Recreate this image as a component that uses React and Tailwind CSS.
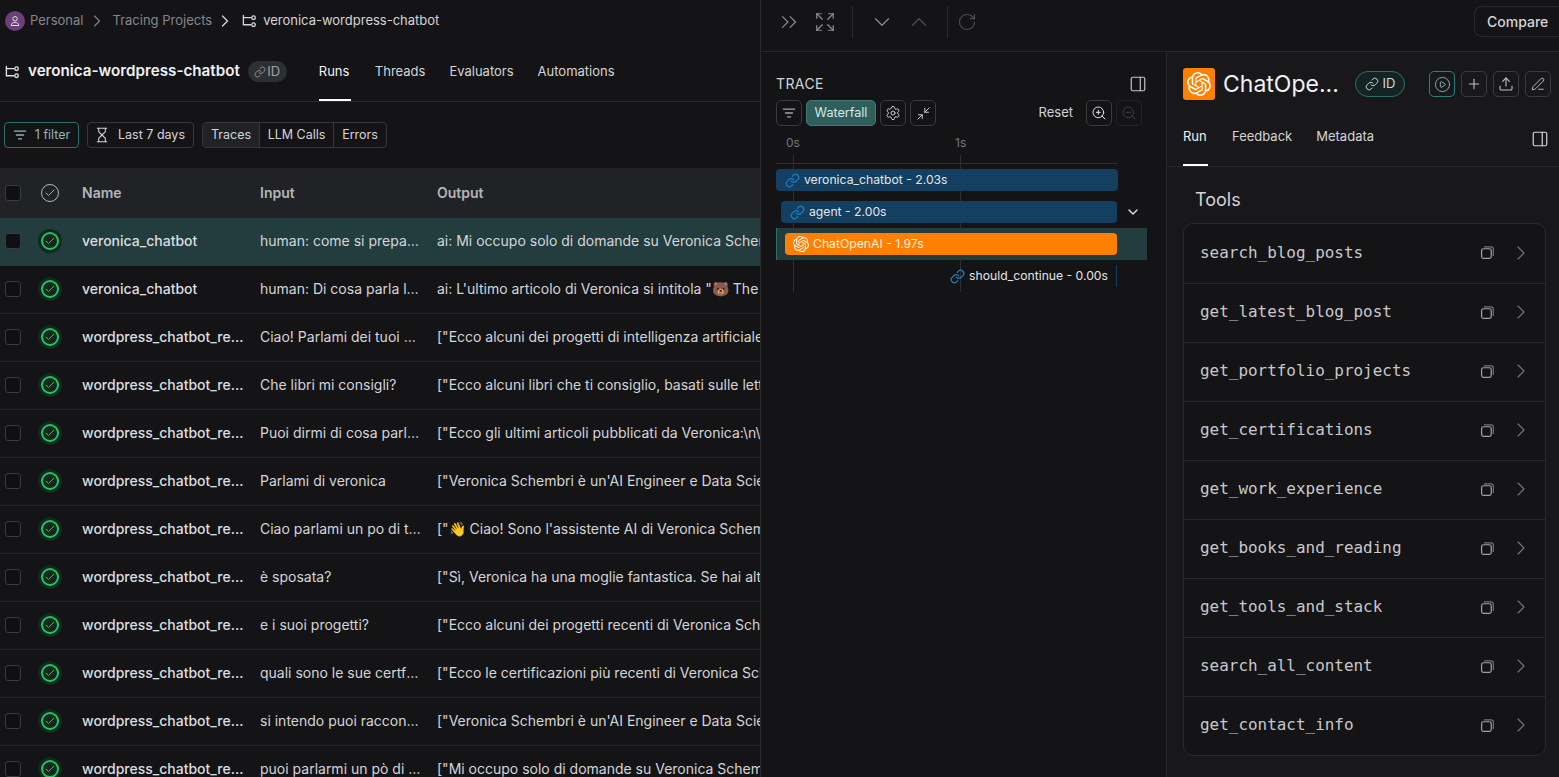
import React from "react";
import {
  ChevronsRight,
  Expand,
  ChevronDown,
  ChevronUp,
  ChevronRight,
  RotateCw,
  Link,
  Hourglass,
  Settings,
  Minimize2,
  ZoomIn,
  ZoomOut,
  PanelRight,
  CirclePlay,
  Plus,
  Upload,
  PenLine,
  Check,
} from "lucide-react";
import { SiOpenai } from "react-icons/si";

const rows = [
  ["veronica_chatbot", "human: come si prepara il caffè?", "ai: Mi occupo solo di domande su Veronica Schembri e sul suo lavoro"],
  ["veronica_chatbot", "human: Di cosa parla l'ultimo articolo?", "ai: L'ultimo articolo di Veronica si intitola \"🐻 The Bear and the AI\""],
  ["wordpress_chatbot_response", "Ciao! Parlami dei tuoi progetti", "[\"Ecco alcuni dei progetti di intelligenza artificiale di Veronica\""],
  ["wordpress_chatbot_response", "Che libri mi consigli?", "[\"Ecco alcuni libri che ti consiglio, basati sulle letture di Veronica\""],
  ["wordpress_chatbot_response", "Puoi dirmi di cosa parlano gli articoli?", "[\"Ecco gli ultimi articoli pubblicati da Veronica:\\n\\n1. Titolo dell'articolo"],
  ["wordpress_chatbot_response", "Parlami di veronica", "[\"Veronica Schembri è un'AI Engineer e Data Scientist con esperienza"],
  ["wordpress_chatbot_response", "Ciao parlami un po di te e di lei", "[\"👋 Ciao! Sono l'assistente AI di Veronica Schembri, come posso aiutarti"],
  ["wordpress_chatbot_response", "è sposata?", "[\"Sì, Veronica ha una moglie fantastica. Se hai altre domande su di lei"],
  ["wordpress_chatbot_response", "e i suoi progetti?", "[\"Ecco alcuni dei progetti recenti di Veronica Schembri che puoi vedere"],
  ["wordpress_chatbot_response", "quali sono le sue certficazioni?", "[\"Ecco le certificazioni più recenti di Veronica Schembri che ha ottenuto"],
  ["wordpress_chatbot_response", "si intendo puoi raccontarmi di lei?", "[\"Veronica Schembri è un'AI Engineer e Data Scientist con esperienza"],
  ["wordpress_chatbot_response", "puoi parlarmi un pò di veronica?", "[\"Mi occupo solo di domande su Veronica Schembri e sul suo lavoro"],
];

const tools = [
  "search_blog_posts",
  "get_latest_blog_post",
  "get_portfolio_projects",
  "get_certifications",
  "get_work_experience",
  "get_books_and_reading",
  "get_tools_and_stack",
  "search_all_content",
  "get_contact_info",
];

const ProjectIcon = ({ className }) => (
  <svg viewBox="0 0 16 16" fill="none" stroke="currentColor" strokeWidth="1.4" strokeLinecap="round" className={className}>
    <path d="M1.5 2.5v10h8" />
    <path d="M1.5 5h8" />
    <circle cx="12.3" cy="5" r="1.9" />
    <circle cx="12.3" cy="12.5" r="1.9" />
  </svg>
);

const FilterIcon = ({ className }) => (
  <svg viewBox="0 0 16 16" fill="none" stroke="currentColor" strokeWidth="1.5" strokeLinecap="round" className={className}>
    <path d="M1.5 3.5h13" />
    <path d="M4 8h8" />
    <path d="M6.3 12.5h3.4" />
  </svg>
);

const CopyIcon = () => (
  <svg viewBox="0 0 16 16" fill="none" stroke="currentColor" strokeWidth="1.3" className="w-[15px] h-[15px] text-[#a1a1aa]">
    <rect x="1.7" y="4" width="10.3" height="10.3" rx="2" />
    <path d="M4.2 1.9h7.6a2.4 2.4 0 0 1 2.4 2.4v7.4" stroke="#71717a" />
  </svg>
);

const StatusIcon = () => (
  <span className="w-6 h-6 rounded-full bg-[#10291f] flex items-center justify-center">
    <span className="w-[18px] h-[18px] rounded-full border-2 border-[#22c55e] flex items-center justify-center">
      <Check className="w-3 h-3 text-[#22c55e]" strokeWidth={2} />
    </span>
  </span>
);

const Checkbox = () => (
  <span className="block w-4 h-4 rounded-[3px] border border-[#3a3b40] bg-[#101013]" />
);

const SquareButton = ({ children, className = "border-[#3a3b40]" }) => (
  <span className={`w-[26px] h-[26px] rounded-[5px] border flex items-center justify-center ${className}`}>
    {children}
  </span>
);

const LeftPane = () => (
  <div className="w-[761px] shrink-0 border-r border-[#28292d] flex flex-col overflow-hidden">
    {/* Breadcrumbs */}
    <div className="h-[40px] shrink-0 pl-[5px] pt-[1px] flex items-center text-[13px]">
      <span className="w-5 h-5 rounded-full bg-[#6b3f78] flex items-center justify-center">
        <svg viewBox="0 0 16 16" fill="none" stroke="#e9dff0" strokeWidth="1.3" className="w-3 h-3">
          <circle cx="8" cy="5" r="3" />
          <path d="M3 14c0-3 2-4 5-4s5 1 5 4z" />
        </svg>
      </span>
      <span className="ml-[5px] text-[#85868c]">Personal</span>
      <ChevronRight className="w-5 h-5 ml-[3px] text-[#85868c]" strokeWidth={1.3} />
      <span className="ml-[6px] text-[#85868c]">Tracing Projects</span>
      <ChevronRight className="w-5 h-5 ml-[3px] text-[#d4d4d8]" strokeWidth={1.6} />
      <ProjectIcon className="w-[15px] h-[15px] ml-[7px] text-[#d4d4d8]" />
      <span className="ml-[6px] text-[#d4d4d8]">veronica-wordpress-chatbot</span>
    </div>

    {/* Project header */}
    <div className="h-[62px] shrink-0 border-b border-[#28292d] pl-[5px] pt-[2px] flex items-center">
      <ProjectIcon className="w-[15px] h-[15px] text-[#e4e4e7]" />
      <span className="ml-2 text-[15.2px] font-semibold text-[#f1f1f3]">veronica-wordpress-chatbot</span>
      <span className="ml-2 h-[21px] w-[39px] rounded-full bg-[#2e2f33] flex items-center justify-center gap-[1px] text-[13px] text-[#a1a1aa]">
        <Link className="w-3 h-3" strokeWidth={1.6} />
        ID
      </span>
      <div className="ml-8 self-stretch flex items-stretch gap-6 text-[13px] text-[#d4d4d8]">
        <span className="w-[32px] border-b-2 border-white text-[#f1f1f3] flex items-center pt-[2px]">Runs</span>
        <span className="flex items-center">Threads</span>
        <span className="flex items-center">Evaluators</span>
        <span className="flex items-center">Automations</span>
      </div>
    </div>

    {/* Filters */}
    <div className="h-[66px] shrink-0 pl-[4px] flex items-center gap-2 text-[12.5px]">
      <span className="h-[26px] w-[75px] rounded-[4px] border border-[#2f6f6d] flex items-center justify-center gap-[8px] text-[#93b5b3]">
        <FilterIcon className="w-[14px] h-[14px]" />
        1 filter
      </span>
      <span className="h-[26px] w-[107px] pr-[2px] rounded-[4px] border border-[#36373c] flex items-center justify-center gap-[8px] text-[#d4d4d8]">
        <Hourglass className="w-4 h-4" strokeWidth={1.6} />
        Last 7 days
      </span>
      <span className="h-[26px] rounded-[4px] border border-[#36373c] flex items-stretch text-[#d4d4d8]">
        <span className="w-[57px] bg-[#212226] rounded-l-[4px] border-r border-[#36373c] flex items-center justify-center">Traces</span>
        <span className="w-[74px] border-r border-[#36373c] flex items-center justify-center">LLM Calls</span>
        <span className="w-[52px] flex items-center justify-center">Errors</span>
      </span>
    </div>

    {/* Runs table */}
    <div className="h-[50px] shrink-0 bg-[#212226] grid grid-cols-[32px_50px_178px_177px_1fr] items-center text-sm font-semibold text-[#b4b5ba]">
      <span className="pl-[5px]"><Checkbox /></span>
      <span className="pl-[9px]">
        <span className="w-[18px] h-[18px] rounded-full border-[1.5px] border-[#b4b5ba] flex items-center justify-center">
          <Check className="w-3 h-3" strokeWidth={1.8} />
        </span>
      </span>
      <span>Name</span>
      <span>Input</span>
      <span>Output</span>
    </div>
    {rows.map((row, index) => (
      <div
        key={index}
        className={`h-[48px] shrink-0 pb-[2px] grid grid-cols-[32px_50px_178px_177px_1fr] items-center text-sm border-b ${
          index === 0 ? "bg-[#233d3f] border-[#233d3f]" : "border-[#26272b]"
        }`}
      >
        <span className="pl-[5px]"><Checkbox /></span>
        <span className="pl-[6px]"><StatusIcon /></span>
        <span className="truncate pr-[15px] font-medium text-[#dcdde0]">{row[0]}</span>
        <span className="truncate pr-[16px] text-[#d4d5d8]">{row[1]}</span>
        <span className="whitespace-nowrap overflow-hidden text-[#d4d5d8]">{row[2]}</span>
      </div>
    ))}
  </div>
);

const TopBar = () => (
  <div className="h-[52px] shrink-0 border-b border-[#28292d] pb-[8px] flex items-center">
    <ChevronsRight className="w-[26px] h-[26px] ml-[15px] text-[#8b8c92]" strokeWidth={1.1} />
    <Expand className="w-[22px] h-[22px] ml-[12px] text-[#8b8c92]" strokeWidth={1.3} />
    <span className="w-px h-8 ml-[16px] bg-[#28292d]" />
    <ChevronDown className="w-[26px] h-[26px] ml-[16px] text-[#8b8c92]" strokeWidth={1.1} />
    <ChevronUp className="w-[26px] h-[26px] ml-[11px] text-[#4d4e53]" strokeWidth={1.1} />
    <span className="w-px h-8 ml-[15px] bg-[#28292d]" />
    <RotateCw className="w-5 h-5 ml-[9px] text-[#4d4e53]" strokeWidth={1.4} />
    <span className="ml-auto h-[31px] w-[86px] -mr-[1px] pl-[12px] rounded-l-lg border border-r-0 border-[#28292d] flex items-center text-sm font-medium text-[#d4d4d8]">
      Compare
    </span>
  </div>
);

const TracePane = () => (
  <div className="w-[406px] shrink-0 border-r border-[#28292d] pl-[15px] pt-[24px]">
    <div className="w-[371px] h-4 flex items-center justify-between text-sm tracking-[0.4px] text-[#d4d4d8]">
      TRACE
      <PanelRight className="w-[18px] h-[18px] text-[#c4c4c8]" strokeWidth={1.6} />
    </div>
    <div className="w-[366px] mt-[8px] flex items-center gap-1">
      <SquareButton><FilterIcon className="w-[14px] h-[14px] text-[#a1a1aa]" /></SquareButton>
      <span className="w-[70px] h-[26px] rounded-[5px] border border-[#3f7a76] bg-[#2e5f5d] flex items-center justify-center text-[12.6px] text-[#d9e6e5]">
        Waterfall
      </span>
      <SquareButton><Settings className="w-4 h-4 text-[#d4d4d8]" strokeWidth={1.4} /></SquareButton>
      <SquareButton><Minimize2 className="w-[15px] h-[15px] text-[#d4d4d8]" strokeWidth={1.5} /></SquareButton>
      <span className="ml-auto mr-[9px] text-[13px] text-[#d4d4d8]">Reset</span>
      <SquareButton><ZoomIn className="w-4 h-4 text-[#e4e4e7]" strokeWidth={1.5} /></SquareButton>
      <SquareButton className="border-[#212226]"><ZoomOut className="w-4 h-4 text-[#3f4045]" strokeWidth={1.5} /></SquareButton>
    </div>

    {/* Waterfall chart */}
    <div className="relative w-[371px] mt-[10px] text-[12.2px] text-[#e4e4e7]">
      <span className="absolute left-[17px] top-[19px] h-[137px] w-px bg-[#2e2f33]" />
      <span className="absolute left-[184px] top-[19px] h-[137px] w-px bg-[#2e2f33]" />
      <div className="relative w-[342px] h-[28px] border-b border-[#2e2f33] text-xs text-[#75767c]">
        <span className="absolute left-[10px] -top-[1px] leading-4">0s</span>
        <span className="absolute left-[179px] -top-[1px] leading-4">1s</span>
      </div>
      <div className="relative h-[22px] w-[342px] mt-[5px] rounded-[4px] bg-[#143f60] flex items-center pl-[9px]">
        <Link className="w-[15px] h-[15px] text-[#1d7fc4]" strokeWidth={2} />
        <span className="ml-[4px]">veronica_chatbot - 2.03s</span>
      </div>
      <div className="relative h-[22px] w-[336px] ml-[5px] mt-[10px] rounded-[4px] bg-[#143f60] flex items-center pl-[9px]">
        <Link className="w-[15px] h-[15px] text-[#1d7fc4]" strokeWidth={2} />
        <span className="ml-[4px]">agent - 2.00s</span>
        <ChevronDown className="absolute -right-[24px] top-[3px] w-4 h-4 text-[#e4e4e7]" strokeWidth={2} />
      </div>
      <div className="relative h-[32px] mt-[5px] bg-[#233d3f] border-l border-[#2f6f6d] pl-[8px] flex items-center">
        <div className="w-[332px] h-[22px] rounded-[4px] bg-[#ff7f00] flex items-center pl-[8px] text-[#fff3e6]">
          <SiOpenai className="w-4 h-4 text-white" />
          <span className="ml-[4px]">ChatOpenAI - 1.97s</span>
        </div>
      </div>
      <div className="relative h-[32px] w-[342px] flex items-center justify-end">
        <Link className="w-[15px] h-[15px] text-[#1d7fc4]" strokeWidth={2} />
        <span className="ml-[4px] mr-[8px]">should_continue - 0.00s</span>
        <span className="w-px h-[22px] mr-[1px] bg-[#143f60]" />
      </div>
    </div>
  </div>
);

const DetailPane = () => (
  <div className="flex-1 bg-[#18181b] flex flex-col min-w-0">
    <div className="h-[60px] shrink-0 pl-[16px] pt-[16px] flex items-start">
      <span className="w-8 h-8 rounded-[3px] bg-[#ff7f00] flex items-center justify-center">
        <SiOpenai className="w-6 h-6 text-white" />
      </span>
      <span className="ml-2 w-[115px] text-[23px] leading-8 whitespace-nowrap text-[#f1f1f3]">ChatOpe...</span>
      <span className="ml-[17px] mt-[3px] h-[26px] w-[50px] rounded-full border border-[#2f6f6d] bg-[#142425] flex items-center justify-center gap-[4px] text-[13px] text-[#d4d4d8]">
        <Link className="w-[14px] h-[14px]" strokeWidth={1.6} />
        ID
      </span>
      <div className="ml-[24px] mt-[3px] flex gap-[6px]">
        <SquareButton className="border-[#2f7f7c]"><CirclePlay className="w-[17px] h-[17px] text-[#8fb5b3]" strokeWidth={1.3} /></SquareButton>
        <SquareButton><Plus className="w-4 h-4 text-[#c4c4c8]" strokeWidth={1.6} /></SquareButton>
        <SquareButton><Upload className="w-4 h-4 text-[#c4c4c8]" strokeWidth={1.6} /></SquareButton>
        <SquareButton><PenLine className="w-[14px] h-[14px] text-[#c4c4c8]" strokeWidth={1.6} /></SquareButton>
      </div>
    </div>
    <div className="h-[55px] shrink-0 border-b border-[#28292d] pl-[16px] pr-[10px] flex items-stretch gap-6 text-[13px] text-[#d4d4d8]">
      <span className="w-[25px] border-b-2 border-white text-[#f1f1f3] pb-[2px] flex items-center">Run</span>
      <span className="pb-[4px] flex items-center">Feedback</span>
      <span className="pb-[4px] flex items-center">Metadata</span>
      <PanelRight className="ml-auto mt-[18px] w-[18px] h-[18px] text-[#d4d4d8]" strokeWidth={1.6} />
    </div>
    <div className="pl-[16px] pr-[13px]">
      <div className="pl-[12px] pt-[20px] h-[56px] text-lg leading-[26px] text-[#d4d4d8]">Tools</div>
      <div className="rounded-[10px] border border-[#28292d] bg-[#141416]">
        {tools.map((tool, index) => (
          <div
            key={tool}
            className={`h-[59px] pl-[16px] pr-[12px] pb-[2px] flex items-center ${index > 0 ? "border-t border-[#28292d]" : ""}`}
          >
            <span className="font-['DejaVu_Sans_Mono',monospace] text-[15.95px] text-[#c8c8cc]">{tool}</span>
            <span className="ml-auto"><CopyIcon /></span>
            <ChevronRight className="ml-[14px] w-6 h-6 text-[#75767c]" strokeWidth={1.1} />
          </div>
        ))}
      </div>
    </div>
  </div>
);

export default function App() {
  return (
    <div className="w-[1559px] h-[777px] overflow-hidden flex bg-[#141416] font-['Inter',sans-serif]">
      <LeftPane />
      <div className="flex-1 min-w-0 flex flex-col">
        <TopBar />
        <div className="flex-1 min-h-0 flex">
          <TracePane />
          <DetailPane />
        </div>
      </div>
    </div>
  );
}
